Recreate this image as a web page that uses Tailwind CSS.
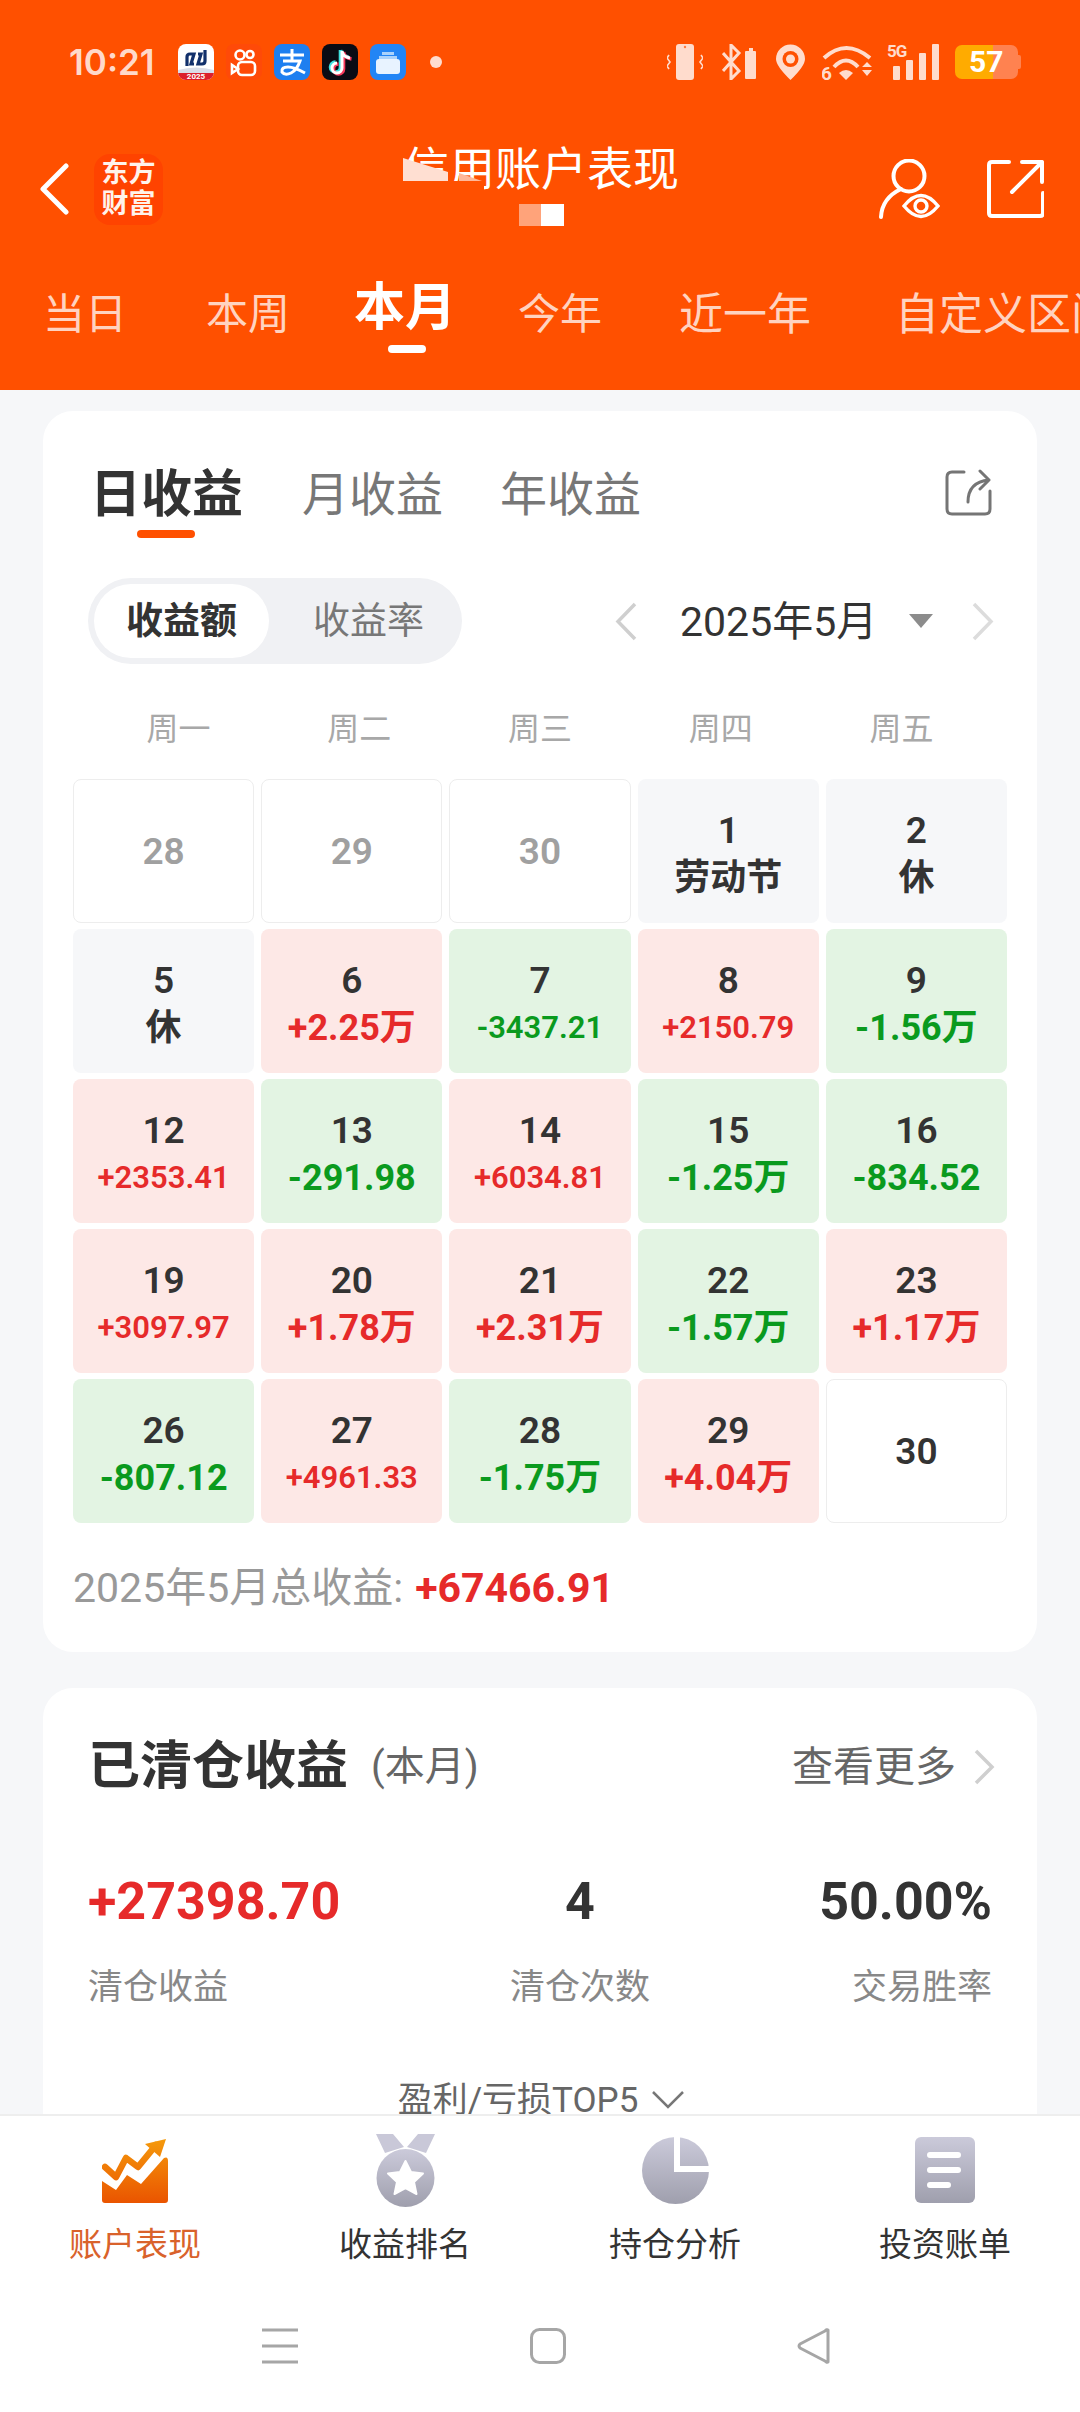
<!doctype html>
<html lang="zh">
<head>
<meta charset="utf-8">
<script src="https://cdn.jsdelivr.net/npm/@tailwindcss/browser@4"></script>
</head>
<body class="bg-[#f6f7f9] font-['Roboto','Noto_Sans_CJK_SC',sans-serif]">
<svg width="0" height="0" class="absolute">
  <defs>
    <linearGradient id="gr" x1="0" y1="0" x2="0" y2="1"><stop offset="0" stop-color="#cbcada"/><stop offset="1" stop-color="#9f9fad"/></linearGradient>
    <linearGradient id="og" gradientUnits="userSpaceOnUse" x1="0" y1="0" x2="0" y2="65"><stop offset="0" stop-color="#f59b0c"/><stop offset="1" stop-color="#ea5400"/></linearGradient>
  </defs>
</svg>
<div class="w-[1080px] h-[2412px] overflow-hidden flex flex-col">

  <header class="bg-[#ff5000] h-[390px] shrink-0 flex flex-col">
    <!-- status bar -->
    <div class="h-[124px] flex items-center pl-[69px] pr-[59px]">
      <span class="w-[109px] font-['Inter',sans-serif] font-semibold text-[35px] leading-none text-[#ffd9ca]">10:21</span>
      <div class="flex gap-[12px]">
        <svg width="36" height="36" viewBox="0 0 36 36"><rect width="36" height="36" rx="8" fill="#fff"/><path d="M0 28h36a8 8 0 0 1-8 8H8a8 8 0 0 1-8-8z" fill="#dc1f2c"/><path d="M0 26q18-5 36 0v3H0z" fill="#d9dde8"/><path d="M9 22V13q0-3 3-3h4l-3 10h3M27 6v11q0 3-3 3h-4l3-10h-3" fill="none" stroke="#12306b" stroke-width="3.2"/><text x="18" y="35" text-anchor="middle" font-size="8" font-weight="700" fill="#fff">2025</text></svg>
        <svg width="36" height="36" viewBox="0 0 36 36"><rect width="36" height="36" rx="8" fill="#ff4a08"/><g fill="none" stroke="#fff" stroke-width="2.6"><circle cx="14" cy="11" r="4.5"/><circle cx="24" cy="10.5" r="3.5"/><rect x="12" y="18" width="17" height="13" rx="4"/><path d="M12 25l-6-4v8z"/></g></svg>
        <svg width="36" height="36" viewBox="0 0 36 36"><rect width="36" height="36" rx="8" fill="#1e7ff0"/><path d="M6 11h24M18 5v11M9 17h17q-3 9-9 12t-9-1q-1-5 6-5 6 0 17 6" fill="none" stroke="#fff" stroke-width="3"/></svg>
        <svg width="36" height="36" viewBox="0 0 36 36"><rect width="36" height="36" rx="8" fill="#0a0b14"/><path d="M20 7v17a5 5 0 1 1-5-5M20 7q1 6 8 7" transform="translate(-1.500 -1)" fill="none" stroke="#3fe0e0" stroke-width="3.6"/><path d="M20 7v17a5 5 0 1 1-5-5M20 7q1 6 8 7" transform="translate(1.500 1)" fill="none" stroke="#f63a5d" stroke-width="3.6"/><path d="M20 7v17a5 5 0 1 1-5-5M20 7q1 6 8 7" fill="none" stroke="#fff" stroke-width="3"/></svg>
        <svg width="36" height="36" viewBox="0 0 36 36"><rect width="36" height="36" rx="8" fill="#2285f5"/><path d="M12 8h12v3H12zM9 12h18v3H9z" fill="#a9d2fb"/><rect x="6" y="15" width="24" height="15" rx="3" fill="#e8f3ff"/></svg>
      </div>
      <span class="ml-[24px] size-[12px] rounded-full bg-[#ffdccd]"></span>
      <div class="ml-auto flex items-center">
        <svg width="36" height="36" viewBox="0 0 36 36" fill="#ffdccd"><rect x="9" y="0" width="18" height="36" rx="3"/><path d="M2 11l-2 3 3 4-3 4 2 3M34 11l2 3-3 4 3 4-2 3" fill="none" stroke="#ffdccd" stroke-width="1.6"/><circle cx="18" cy="3" r="1.2" fill="#ff7a40"/></svg>
        <svg class="ml-[19px]" width="35" height="36" viewBox="0 0 35 36"><path d="M1 9l16 18-8 8V1l8 8L1 27" fill="none" stroke="#ffdccd" stroke-width="3"/><path d="M24 7h3V4h4v3h2q1 0 1 1v26q0 1-1 1h-9q-1 0-1-1V8q0-1 1-1z" fill="#ffdccd"/></svg>
        <svg class="ml-[18px]" width="31" height="37" viewBox="0 0 31 37"><path d="M15.500 36Q1 22 1 15a14.500 14.500 0 0 1 29 0q0 7-14.500 21z" fill="#ffdccd"/><circle cx="15.500" cy="15" r="8" fill="#ff5000"/><circle cx="15.500" cy="15" r="4.500" fill="#ffdccd"/></svg>
        <svg class="ml-[16px]" width="51" height="36" viewBox="0 0 51 36"><g fill="none" stroke="#ffdccd" stroke-width="4"><path d="M2 14Q24-6 48 14"/><path d="M12 23q12-13 24 0"/></g><path d="M17 29q7-6 14 0l-7 7z" fill="#ffdccd"/><text x="-1" y="36" font-size="19" font-weight="700" fill="#ffdccd">6</text><path d="M40 23l5-5 5 5zM40 26h10l-5 6z" fill="#ffdccd"/></svg>
        <svg class="ml-[14px]" width="52" height="36" viewBox="0 0 52 36" fill="#ffdccd"><text x="0" y="13" font-size="17" font-weight="700" letter-spacing="-1">5G</text><rect x="6" y="22" width="7" height="14" rx="1"/><rect x="19" y="16" width="7" height="20" rx="1"/><rect x="32" y="9" width="7" height="27" rx="1"/><rect x="45" y="0" width="7" height="36" rx="1"/></svg>
        <div class="ml-[16px] relative w-[66px] h-[34px] flex">
          <span class="w-[38px] h-full bg-[#ffab00] rounded-l-[7px]"></span>
          <span class="w-[25px] h-full bg-[#ff8250] rounded-r-[7px]"></span>
          <span class="w-[3px] h-[14px] self-center bg-[#ff8250] rounded-r-[2px]"></span>
          <span class="absolute left-[14px] top-0 h-full flex items-center font-bold text-[30px] leading-none text-white">57</span>
        </div>
      </div>
    </div>

    <!-- title row -->
    <div class="h-[130px] grid grid-cols-[403px_auto_1fr]">
      <div class="flex items-center pl-[40px]">
        <svg width="29" height="52" viewBox="0 0 29 52"><path d="M26 3L3 26l23 23" fill="none" stroke="#fff" stroke-width="5" stroke-linecap="round" stroke-linejoin="round"/></svg>
        <div class="ml-[25px] w-[69px] h-[71px] rounded-[16px] bg-[#ff4300] flex flex-col items-center justify-center font-bold text-[27px] leading-[31px] text-[#fff3ec]"><span>东方</span><span>财富</span></div>
      </div>
      <div class="pt-[20px] flex flex-col items-center">
        <div class="relative h-[50px] w-[276px]">
          <span class="block text-[46px] leading-[50px] text-white whitespace-nowrap">信用账户表现</span>
          <svg class="absolute left-0 top-0" width="90" height="52" viewBox="0 0 90 52"><path d="M45 37h36v15H45z" fill="#ff5000"/><path d="M56 29l23 8H56z" fill="#ffb89a"/><path d="M0 14l45 14v9H0z" fill="#ffdfd2"/><path d="M0 37h45v15H0z" fill="#ff5000"/></svg>
        </div>
        <div class="mt-[10px] flex h-[22px]"><span class="w-[22px] bg-[#ffa37a]"></span><span class="w-[23px] bg-white"></span></div>
      </div>
      <div class="flex items-center justify-end gap-[47px] pr-[36px]">
        <svg width="61" height="60" viewBox="0 0 61 60" fill="none" stroke="#fff" stroke-width="4" stroke-linecap="round"><circle cx="30" cy="17" r="15.500"/><path d="M2 58q1-19 20-28"/><path d="M25 47q17-21 34 0q-17 21-34 0z" stroke-width="3.4"/><circle cx="42" cy="47" r="6" stroke-width="3.4"/></svg>
        <svg width="57" height="58" viewBox="0 0 57 58" fill="none" stroke="#fff" stroke-width="4" stroke-linecap="round" stroke-linejoin="round"><path d="M22 2H5Q2 2 2 5v48q0 3 3 3h48q3 0 3-3V33"/><path d="M25 32L55 2M35 2h20v20"/></svg>
      </div>
    </div>

    <!-- range tabs -->
    <div class="flex-1 overflow-hidden flex pl-[43px] pt-[37px] whitespace-nowrap text-[#ffd3c0] text-[42px] leading-[48px]">
      <span>当日</span>
      <span class="ml-[79px]">本周</span>
      <span class="ml-[64px] -mt-[7px] relative text-white font-bold text-[51px]">本月
        <span class="absolute left-[34px] top-[61px] w-[38px] h-[8px] rounded-full bg-white"></span>
      </span>
      <span class="ml-[62px]">今年</span>
      <span class="ml-[77px] text-[44px]">近一年</span>
      <span class="ml-[84px] text-[44px]">自定义区间</span>
    </div>
  </header>

  <main class="flex-1 overflow-hidden px-[43px] pt-[21px] min-h-0">
    <!-- calendar card -->
    <section class="bg-white rounded-[30px] h-[1241px] px-[30px] pt-[47px]">
      <div class="flex items-start pl-[17px] pr-[15px] h-[72px]">
        <div class="relative h-[72px] flex items-center font-bold text-[51px] leading-none text-[#333]">日收益
          <span class="absolute left-[47px] top-[72px] w-[58px] h-[8px] rounded-full bg-[#ff5000]"></span>
        </div>
        <span class="ml-[59px] h-[72px] flex items-center text-[47px] leading-none text-[#777]">月收益</span>
        <span class="ml-[57px] h-[72px] flex items-center text-[47px] leading-none text-[#777]">年收益</span>
        <svg class="ml-auto mt-[11px]" width="47" height="47" viewBox="0 0 47 47" fill="none" stroke="#757575" stroke-width="3" stroke-linecap="round" stroke-linejoin="round"><path d="M19 3H7Q2 3 2 8v32q0 5 5 5h33q5 0 5-5V22"/><path d="M23 33q0-20 21-22M35 2l9 9-9 9"/></svg>
      </div>

      <div class="mt-[48px] flex items-center pl-[15px] pr-[13px] h-[86px]">
        <div class="w-[374px] h-[86px] rounded-full bg-[#f0f1f4] flex items-center pl-[6px]">
          <span class="w-[175px] h-[74px] rounded-full bg-white flex items-center justify-center font-bold text-[37px] leading-none text-[#333]">收益额</span>
          <span class="ml-[44px] text-[37px] leading-none text-[#777]">收益率</span>
        </div>
        <svg class="ml-[153px]" width="22" height="39" viewBox="0 0 22 39"><path d="M20 2L3 19.500 20 37" fill="none" stroke="#cfcfcf" stroke-width="3.500"/></svg>
        <span class="ml-[43px] mt-[2px] text-[41px] leading-none text-[#333] whitespace-nowrap">2025年5月</span>
        <svg class="ml-[32px]" width="24" height="14" viewBox="0 0 24 14"><path d="M0 0h24L12 14z" fill="#8c8c8c"/></svg>
        <svg class="ml-auto" width="22" height="39" viewBox="0 0 22 39"><path d="M2 2l17 17.500L2 37" fill="none" stroke="#dcdcdc" stroke-width="3.500"/></svg>
      </div>

      <div class="mt-[45px] mx-[15px] grid grid-cols-5 h-[40px] items-center text-center text-[32px] leading-none text-[#a8a8a8]">
        <span>周一</span><span>周二</span><span>周三</span><span>周四</span><span>周五</span>
      </div>

      <div class="mt-[30px] grid grid-cols-5 gap-x-[7px] gap-y-[6px] w-[934px]">
        <div class="h-[144px] rounded-[8px] border border-[#ededed] pt-[2px] flex items-center justify-center font-semibold text-[37px] text-[#a0a0a0]">28</div>
        <div class="h-[144px] rounded-[8px] border border-[#ededed] pt-[2px] flex items-center justify-center font-semibold text-[37px] text-[#a0a0a0]">29</div>
        <div class="h-[144px] rounded-[8px] border border-[#ededed] pt-[2px] flex items-center justify-center font-semibold text-[37px] text-[#a0a0a0]">30</div>
        <div class="h-[144px] rounded-[8px] bg-[#f6f7f9] pt-[8px] flex flex-col items-center justify-center text-[#333]"><span class="font-semibold text-[37px] leading-[46px]">1</span><span class="font-bold text-[36px] leading-[48px]">劳动节</span></div>
        <div class="h-[144px] rounded-[8px] bg-[#f6f7f9] pt-[8px] flex flex-col items-center justify-center text-[#333]"><span class="font-semibold text-[37px] leading-[46px]">2</span><span class="font-bold text-[36px] leading-[48px]">休</span></div>

        <div class="h-[144px] rounded-[8px] bg-[#f6f7f9] pt-[8px] flex flex-col items-center justify-center text-[#333]"><span class="font-semibold text-[37px] leading-[46px]">5</span><span class="font-bold text-[36px] leading-[48px]">休</span></div>
        <div class="h-[144px] rounded-[8px] bg-[#fde8e6] pt-[8px] flex flex-col items-center justify-center"><span class="font-semibold text-[37px] leading-[46px] text-[#333]">6</span><span class="font-bold text-[36px] leading-[48px] text-[#e62a2a]">+2.25万</span></div>
        <div class="h-[144px] rounded-[8px] bg-[#e3f4e3] pt-[8px] flex flex-col items-center justify-center"><span class="font-semibold text-[37px] leading-[46px] text-[#333]">7</span><span class="font-semibold text-[31px] leading-[48px] text-[#0a9a1e]">-3437.21</span></div>
        <div class="h-[144px] rounded-[8px] bg-[#fde8e6] pt-[8px] flex flex-col items-center justify-center"><span class="font-semibold text-[37px] leading-[46px] text-[#333]">8</span><span class="font-semibold text-[31px] leading-[48px] text-[#e62a2a]">+2150.79</span></div>
        <div class="h-[144px] rounded-[8px] bg-[#e3f4e3] pt-[8px] flex flex-col items-center justify-center"><span class="font-semibold text-[37px] leading-[46px] text-[#333]">9</span><span class="font-bold text-[36px] leading-[48px] text-[#0a9a1e]">-1.56万</span></div>

        <div class="h-[144px] rounded-[8px] bg-[#fde8e6] pt-[8px] flex flex-col items-center justify-center"><span class="font-semibold text-[37px] leading-[46px] text-[#333]">12</span><span class="font-semibold text-[31px] leading-[48px] text-[#e62a2a]">+2353.41</span></div>
        <div class="h-[144px] rounded-[8px] bg-[#e3f4e3] pt-[8px] flex flex-col items-center justify-center"><span class="font-semibold text-[37px] leading-[46px] text-[#333]">13</span><span class="font-bold text-[36px] leading-[48px] text-[#0a9a1e]">-291.98</span></div>
        <div class="h-[144px] rounded-[8px] bg-[#fde8e6] pt-[8px] flex flex-col items-center justify-center"><span class="font-semibold text-[37px] leading-[46px] text-[#333]">14</span><span class="font-semibold text-[31px] leading-[48px] text-[#e62a2a]">+6034.81</span></div>
        <div class="h-[144px] rounded-[8px] bg-[#e3f4e3] pt-[8px] flex flex-col items-center justify-center"><span class="font-semibold text-[37px] leading-[46px] text-[#333]">15</span><span class="font-bold text-[36px] leading-[48px] text-[#0a9a1e]">-1.25万</span></div>
        <div class="h-[144px] rounded-[8px] bg-[#e3f4e3] pt-[8px] flex flex-col items-center justify-center"><span class="font-semibold text-[37px] leading-[46px] text-[#333]">16</span><span class="font-bold text-[36px] leading-[48px] text-[#0a9a1e]">-834.52</span></div>

        <div class="h-[144px] rounded-[8px] bg-[#fde8e6] pt-[8px] flex flex-col items-center justify-center"><span class="font-semibold text-[37px] leading-[46px] text-[#333]">19</span><span class="font-semibold text-[31px] leading-[48px] text-[#e62a2a]">+3097.97</span></div>
        <div class="h-[144px] rounded-[8px] bg-[#fde8e6] pt-[8px] flex flex-col items-center justify-center"><span class="font-semibold text-[37px] leading-[46px] text-[#333]">20</span><span class="font-bold text-[36px] leading-[48px] text-[#e62a2a]">+1.78万</span></div>
        <div class="h-[144px] rounded-[8px] bg-[#fde8e6] pt-[8px] flex flex-col items-center justify-center"><span class="font-semibold text-[37px] leading-[46px] text-[#333]">21</span><span class="font-bold text-[36px] leading-[48px] text-[#e62a2a]">+2.31万</span></div>
        <div class="h-[144px] rounded-[8px] bg-[#e3f4e3] pt-[8px] flex flex-col items-center justify-center"><span class="font-semibold text-[37px] leading-[46px] text-[#333]">22</span><span class="font-bold text-[36px] leading-[48px] text-[#0a9a1e]">-1.57万</span></div>
        <div class="h-[144px] rounded-[8px] bg-[#fde8e6] pt-[8px] flex flex-col items-center justify-center"><span class="font-semibold text-[37px] leading-[46px] text-[#333]">23</span><span class="font-bold text-[36px] leading-[48px] text-[#e62a2a]">+1.17万</span></div>

        <div class="h-[144px] rounded-[8px] bg-[#e3f4e3] pt-[8px] flex flex-col items-center justify-center"><span class="font-semibold text-[37px] leading-[46px] text-[#333]">26</span><span class="font-bold text-[36px] leading-[48px] text-[#0a9a1e]">-807.12</span></div>
        <div class="h-[144px] rounded-[8px] bg-[#fde8e6] pt-[8px] flex flex-col items-center justify-center"><span class="font-semibold text-[37px] leading-[46px] text-[#333]">27</span><span class="font-semibold text-[31px] leading-[48px] text-[#e62a2a]">+4961.33</span></div>
        <div class="h-[144px] rounded-[8px] bg-[#e3f4e3] pt-[8px] flex flex-col items-center justify-center"><span class="font-semibold text-[37px] leading-[46px] text-[#333]">28</span><span class="font-bold text-[36px] leading-[48px] text-[#0a9a1e]">-1.75万</span></div>
        <div class="h-[144px] rounded-[8px] bg-[#fde8e6] pt-[8px] flex flex-col items-center justify-center"><span class="font-semibold text-[37px] leading-[46px] text-[#333]">29</span><span class="font-bold text-[36px] leading-[48px] text-[#e62a2a]">+4.04万</span></div>
        <div class="h-[144px] rounded-[8px] border border-[#ededed] pt-[2px] flex items-center justify-center font-semibold text-[37px] text-[#333]">30</div>
      </div>

      <div class="mt-[40px] h-[50px] flex items-center text-[41px] leading-none whitespace-nowrap">
        <span class="text-[#999]">2025年5月总收益:</span><span class="ml-[12px] font-bold text-[#e62a2a]">+67466.91</span>
      </div>
    </section>

    <!-- closed positions card -->
    <section class="mt-[36px] bg-white rounded-t-[30px] px-[45px] pt-[49px] h-[600px]">
      <div class="h-[60px] flex items-center whitespace-nowrap">
        <span class="font-bold text-[52px] leading-none text-[#333]">已清仓收益</span>
        <span class="ml-[23px] text-[40px] leading-none text-[#666]">(本月)</span>
        <span class="ml-auto text-[41px] leading-none text-[#666]">查看更多</span>
        <svg class="ml-[17px] mr-[-3px]" width="22" height="36" viewBox="0 0 22 36"><path d="M3 2l16 16L3 34" fill="none" stroke="#cfcfcf" stroke-width="3.500"/></svg>
      </div>
      <div class="mt-[75px] flex h-[60px] items-center font-bold text-[52px] leading-none text-[#333] whitespace-nowrap">
        <span class="w-[422px] text-[#e62a2a]">+27398.70</span>
        <span class="w-[140px] text-center">4</span>
        <span class="flex-1 text-right">50.00%</span>
      </div>
      <div class="mt-[33px] flex h-[44px] items-center text-[35px] leading-none text-[#888] whitespace-nowrap">
        <span class="w-[422px]">清仓收益</span>
        <span class="w-[140px] text-center">清仓次数</span>
        <span class="flex-1 text-right">交易胜率</span>
      </div>
      <div class="mt-[69px] h-[44px] flex items-center justify-center gap-[14px] pl-[2px] text-[35px] leading-none text-[#666] whitespace-nowrap">
        <span>盈利/亏损TOP5</span>
        <svg width="32" height="18" viewBox="0 0 32 18"><path d="M1 1l15 15L31 1" fill="none" stroke="#777" stroke-width="2.500"/></svg>
      </div>
    </section>
  </main>

  <!-- bottom nav -->
  <footer class="h-[298px] shrink-0 bg-white border-t-2 border-[#eeeeee]">
    <div class="grid grid-cols-4 pt-[16px]">
      <div class="flex flex-col items-center">
        <div class="h-[76px] flex items-center">
          <svg width="66" height="65" viewBox="0 0 66 65"><path d="M0 43l14 9 11-15 14 9 23-26q4-2 4 3v39q0 3-3 3H3q-3 0-3-3z" fill="url(#og)"/><path d="M3 29l11 10 10-19 12 9 18-22" fill="none" stroke="url(#og)" stroke-width="6.500" stroke-linecap="round" stroke-linejoin="round"/><path d="M43 6l21-5-6 18z" fill="url(#og)"/></svg>
        </div>
        <span class="mt-[14px] h-[44px] flex items-center text-[33px] leading-none text-[#d9622b]">账户表现</span>
      </div>
      <div class="flex flex-col items-center">
        <div class="h-[76px] flex items-center">
          <svg width="59" height="73" viewBox="0 0 59 73"><path d="M0 0h17l11 13-19 6zM59 0H42L31 13l19 6z" fill="#c9c8d8"/><circle cx="29.500" cy="44" r="29" fill="url(#gr)"/><path d="M29.500 27l5.500 11 12 1.500-9 8.500 2.500 12-11-6-11 6 2.500-12-9-8.500 12-1.500z" fill="#fff" stroke="#fff" stroke-width="2" stroke-linejoin="round"/></svg>
        </div>
        <span class="mt-[14px] h-[44px] flex items-center text-[33px] leading-none text-[#333]">收益排名</span>
      </div>
      <div class="flex flex-col items-center">
        <div class="h-[76px] flex items-center">
          <svg width="67" height="67" viewBox="0 0 67 67"><circle cx="33.500" cy="33.500" r="33.500" fill="url(#gr)"/><path d="M32 0h6v29h29v6H32z" fill="#fff"/></svg>
        </div>
        <span class="mt-[14px] h-[44px] flex items-center text-[33px] leading-none text-[#333]">持仓分析</span>
      </div>
      <div class="flex flex-col items-center">
        <div class="h-[76px] flex items-center">
          <svg width="60" height="66" viewBox="0 0 60 66"><rect width="60" height="66" rx="6" fill="url(#gr)"/><path d="M15 18h28M15 33h28M15 48h18" stroke="#fff" stroke-width="6" stroke-linecap="round"/></svg>
        </div>
        <span class="mt-[14px] h-[44px] flex items-center text-[33px] leading-none text-[#333]">投资账单</span>
      </div>
    </div>
    <div class="mt-[62px] flex items-center pl-[262px]">
      <svg width="36" height="36" viewBox="0 0 36 36"><path d="M0 2h36M0 18h36M0 34h36" stroke="#a6a6a6" stroke-width="3"/></svg>
      <svg class="ml-[232px]" width="36" height="36" viewBox="0 0 36 36"><rect x="1.500" y="1.500" width="33" height="33" rx="8" fill="none" stroke="#a6a6a6" stroke-width="3"/></svg>
      <svg class="ml-[231px]" width="33" height="36" viewBox="0 0 33 36"><path d="M31 2q-1-1-3 1L3 16q-2 2 0 4l25 13q2 2 3 1z" fill="none" stroke="#a6a6a6" stroke-width="3" stroke-linejoin="round"/></svg>
    </div>
  </footer>
</div>
</body>
</html>
